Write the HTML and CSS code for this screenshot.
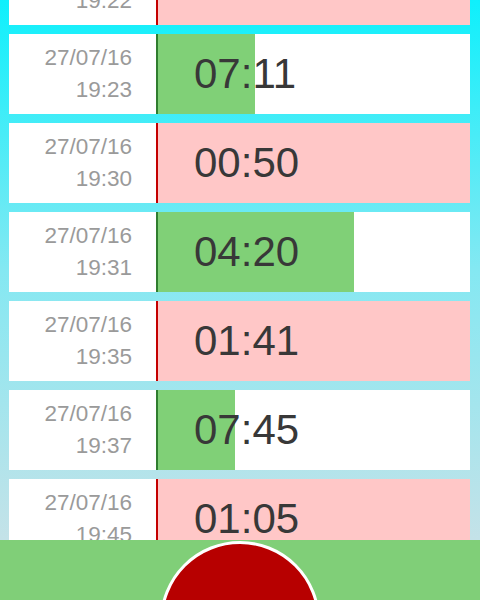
FILE: index.html
```html
<!DOCTYPE html>
<html>
<head>
  <title>Timer Log</title>
  <link rel="stylesheet" href="styles.css">
</head>
<body>
  <div class="screen">
    <div class="list">
      <div class="rows">
        <div class="row over">
          <div class="date">27/07/16<br>19:22</div>
          <div class="bar"><span class="time">03:56</span></div>
        </div>
        <div class="row ok">
          <div class="date">27/07/16<br>19:23</div>
          <div class="bar"><div class="fill" style="width:97px"></div><span class="time">07:11</span></div>
        </div>
        <div class="row over">
          <div class="date">27/07/16<br>19:30</div>
          <div class="bar"><span class="time">00:50</span></div>
        </div>
        <div class="row ok">
          <div class="date">27/07/16<br>19:31</div>
          <div class="bar"><div class="fill" style="width:196px"></div><span class="time">04:20</span></div>
        </div>
        <div class="row over">
          <div class="date">27/07/16<br>19:35</div>
          <div class="bar"><span class="time">01:41</span></div>
        </div>
        <div class="row ok">
          <div class="date">27/07/16<br>19:37</div>
          <div class="bar"><div class="fill" style="width:77px"></div><span class="time">07:45</span></div>
        </div>
        <div class="row over">
          <div class="date">27/07/16<br>19:45</div>
          <div class="bar"><span class="time">01:05</span></div>
        </div>
      </div>
    </div>
    <div class="footer">
      <button class="record"></button>
    </div>
  </div>
</body>
</html>
```

FILE: styles.css
```css
body {
  margin: 0;
  font-family: "Liberation Sans", Arial, sans-serif;
}

.screen {
  width: 480px;
  height: 600px;
  display: flex;
  flex-direction: column;
  overflow: hidden;
}

.list {
  height: 540px;
  flex-shrink: 0;
  overflow: hidden;
  padding: 0 10px 0 9px;
  background: linear-gradient(#0ef0fc, #84e8f2 50%, #c4e2e8);
}

.rows {
  margin-top: -55px;
}

.row {
  display: flex;
  height: 80px;
  margin-bottom: 9px;
  background: #fff;
}

.date {
  width: 123px;
  padding-right: 24px;
  display: flex;
  flex-direction: column;
  justify-content: center;
  text-align: right;
  font-size: 22.5px;
  line-height: 32px;
  color: #9a9a9a;
}

.bar {
  flex: 1;
  display: flex;
  align-items: center;
  position: relative;
  border-left: 2px solid #c40000;
}

.row.over .bar {
  background: #ffc7c7;
}

.row.ok .bar {
  border-left-color: #2f7d2f;
  background: #fff;
}

.fill {
  position: absolute;
  top: 0;
  left: 0;
  bottom: 0;
  background: #80d077;
}

.time {
  position: relative;
  padding-left: 36px;
  font-size: 42px;
  color: #383838;
}

.footer {
  height: 60px;
  background: #80cf78;
  display: flex;
  justify-content: center;
  align-items: flex-start;
  padding-top: 1px;
  overflow: hidden;
}

.record {
  flex-shrink: 0;
  width: 160px;
  height: 160px;
  border-radius: 50%;
  border: 3px solid #fff;
  background: #b70000;
  padding: 0;
}
```
